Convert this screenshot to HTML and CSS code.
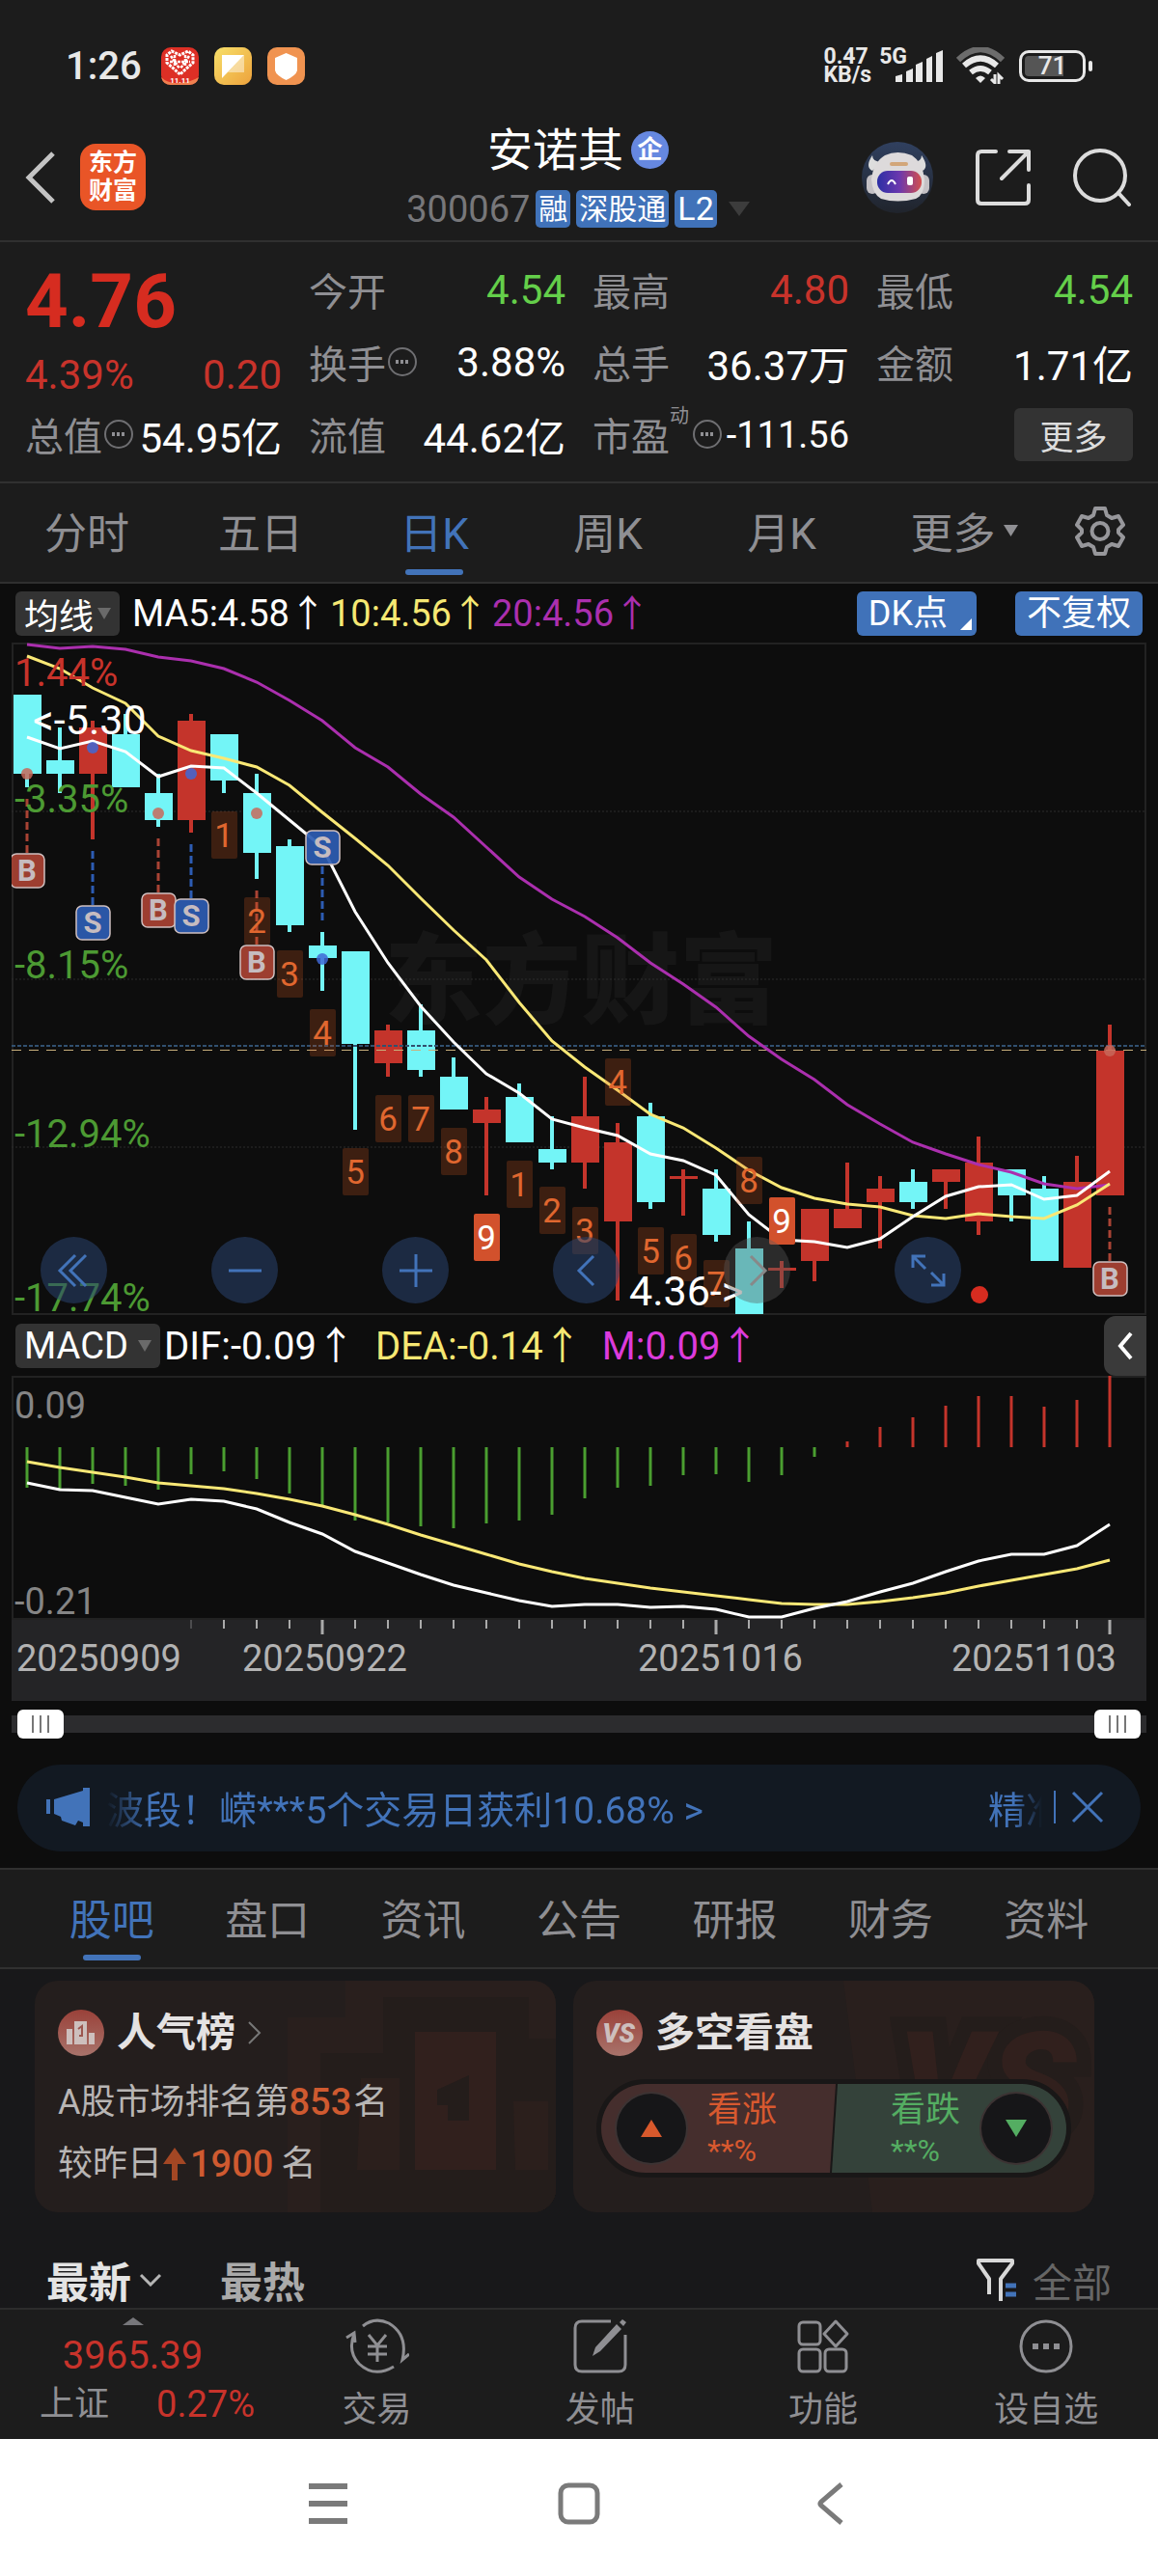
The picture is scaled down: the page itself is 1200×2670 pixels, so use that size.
FILE: index.html
```html
<!DOCTYPE html>
<html lang="zh-CN">
	<head>
		<meta charset="utf-8">
		<meta name="viewport" content="width=device-width, initial-scale=1">
		<title>安诺其 300067</title>
		<link rel="stylesheet" href="styles.css">
	</head>
	<body>
		<!-- 系统状态栏 -->
		<div class="status">
			<div class="status-left">
				<span class="clock">1:26</span>
				<svg class="app-icon" viewBox="0 0 39 39">
					<rect width="39" height="39" rx="10" fill="#dd2f25"/>
					<path d="M0 31Q7 38 19 37T39 31Q37 39 29 39H10Q2 39 0 31Z" fill="#f08050"/>
					<path d="M19.500 28L6 16V8L11 4L19.500 8L28 4L33 8V16Z" fill="none" stroke="#fff" stroke-width="3" stroke-dasharray="3 1"/>
					<path d="M10 9L19 22M29 9L20 22M9 15H30M14 8V19M25 8V19" stroke="#fff" stroke-width="2.500" stroke-dasharray="3 1"/>
					<text x="19.500" y="37" text-anchor="middle" font-size="8" font-weight="700" fill="#fff">11.11</text>
				</svg>
				<svg class="app-icon" viewBox="0 0 39 39">
					<defs><linearGradient id="gold" x1="0" y1="0" x2="1" y2="1"><stop offset="0" stop-color="#f7e06a"/><stop offset="1" stop-color="#eda23c"/></linearGradient></defs>
					<rect width="39" height="39" rx="10" fill="url(#gold)"/>
					<path d="M8 8H31L8 32Z" fill="#fff"/>
					<path d="M31 8V26H14Z" fill="#fff" opacity=".45"/>
				</svg>
				<svg class="app-icon" viewBox="0 0 39 39">
					<rect width="39" height="39" rx="10" fill="#f09350"/>
					<path d="M19.500 6L31 11V24Q30 29 19.500 34Q9 29 8 24V11Z" fill="#fff"/>
				</svg>
			</div>
			<div class="status-right">
				<span class="speed">0.47<br>KB/s</span>
				<span class="net">5G</span>
				<svg class="signal" viewBox="0 0 49 33" fill="#e8e8e8">
					<path d="M0 33V27L7 25V33ZM11 33V22L18 19V33ZM21 33V15L28 12V33ZM32 33V9L38 6V33ZM42 33V3L49 0V33Z"/>
				</svg>
				<svg class="wifi" viewBox="0 0 50 38" fill="none">
					<path d="M2 13Q25 -9 48 13" stroke="#6c6c6c" stroke-width="6"/>
					<path d="M8 19Q25 4 42 19M15 26Q25 18 35 26" stroke="#e8e8e8" stroke-width="6"/>
					<path d="M20 32Q25 27 30 32L25 37Z" fill="#e8e8e8"/>
					<path d="M40 28V37L36 33M44 38V29L48 33" stroke="#e8e8e8" stroke-width="3"/>
				</svg>
				<span class="battery"><span class="battery-level">71</span></span>
			</div>
		</div>

		<header class="topbar">
			<div class="topbar-left">
				<button class="icon-btn" aria-label="返回">
					<svg width="32" height="56" viewBox="0 0 32 56"><path d="M29 3L4 28L29 53" fill="none" stroke="#c4c4c4" stroke-width="5"/></svg>
				</button>
				<a class="brand" href="#">东方<br>财富</a>
			</div>
			<div class="title">
				<h1>安诺其<span class="corp">企</span></h1>
				<p class="code">
					<span>300067</span><span class="chip">融</span><span class="chip">深股通</span><span class="chip chip-l2">L2</span>
					<svg width="22" height="15" viewBox="0 0 22 15"><path d="M0 0H22L11 15Z" fill="#3c3c3c"/></svg>
				</p>
			</div>
			<div class="topbar-right">
				<button class="icon-btn" aria-label="智能助手">
					<svg width="76" height="76" viewBox="0 0 76 76">
						<defs>
							<linearGradient id="night" x2="0" y2="1"><stop offset="0" stop-color="#30405f"/><stop offset="1" stop-color="#20242c"/></linearGradient>
							<linearGradient id="visor"><stop offset="0" stop-color="#2c2fa5"/><stop offset=".5" stop-color="#6b38ae"/><stop offset="1" stop-color="#d3504e"/></linearGradient>
						</defs>
						<circle cx="38" cy="38" r="37" fill="url(#night)"/>
						<path d="M12 15Q4 27 12 31L22 22Q12 22 12 15ZM63 15Q71 27 64 31L54 22Q63 22 63 15Z" fill="#ddd"/>
						<rect x="6" y="35" width="12" height="20" rx="6" fill="#c4c1c5"/>
						<rect x="59" y="35" width="12" height="20" rx="6" fill="#c4c1c5"/>
						<path d="M25 15Q38 9 53 15Q64 22 66 40Q66 56 57 60Q38 65 21 60Q12 55 11 40Q13 22 25 15Z" fill="#dddadb"/>
						<rect x="17" y="31" width="46" height="23" rx="11" fill="url(#visor)"/>
						<rect x="30" y="22" width="19" height="4" rx="2" fill="#d2a679"/>
						<path d="M28 45Q32 37 36 45" fill="none" stroke="#fff" stroke-width="2"/>
						<rect x="48" y="37" width="6" height="9" rx="2" fill="#fff"/>
					</svg>
				</button>
				<button class="icon-btn" aria-label="分享">
					<svg width="60" height="60" viewBox="0 0 60 60" fill="none" stroke="#dcdcdc" stroke-width="4" stroke-linecap="round" stroke-linejoin="round"><path d="M22 3H7Q3 3 3 7V53Q3 57 7 57H52Q56 57 56 53V38M36 3H56V22M56 3L28 31"/></svg>
				</button>
				<button class="icon-btn" aria-label="搜索">
					<svg width="60" height="60" viewBox="0 0 60 60" fill="none" stroke="#dcdcdc" stroke-width="4" stroke-linecap="round"><circle cx="28" cy="28" r="26"/><path d="M47 46L58 58"/></svg>
				</button>
			</div>
		</header>

		<!-- 行情数据 -->
		<section class="quote">
			<div class="price-box">
				<strong class="price">4.76</strong>
				<div class="price-diff"><span>4.39%</span><span>0.20</span></div>
			</div>
			<div class="cell"><span class="label">今开</span><span class="down">4.54</span></div>
			<div class="cell"><span class="label">最高</span><span class="up">4.80</span></div>
			<div class="cell"><span class="label">最低</span><span class="down">4.54</span></div>
			<div class="cell"><span class="label">换手<i class="info"></i></span><span>3.88%</span></div>
			<div class="cell"><span class="label">总手</span><span>36.37万</span></div>
			<div class="cell"><span class="label">金额</span><span>1.71亿</span></div>
			<div class="cell"><span class="label">总值<i class="info"></i></span><span>54.95亿</span></div>
			<div class="cell"><span class="label">流值</span><span>44.62亿</span></div>
			<div class="cell"><span class="label">市盈<sup>动</sup><i class="info"></i></span><span class="pe">-111.56</span></div>
			<div class="cell cell-more"><button class="more-btn">更多</button></div>
		</section>

		<nav class="periods">
			<button>分时</button>
			<button>五日</button>
			<button class="active">日K</button>
			<button>周K</button>
			<button>月K</button>
			<button class="period-more">更多<svg width="15" height="12" viewBox="0 0 15 12"><path d="M0 0H15L7.500 12Z" fill="#8f8f93"/></svg></button>
			<button class="period-set" aria-label="设置">
				<svg width="52" height="52" viewBox="0 0 52 52" fill="none" stroke="#97979b" stroke-width="4" stroke-linejoin="round">
					<path d="M21 3H31L33 10L38 13L45 11L50 20L45 25V28L50 33L45 42L38 40L33 43L31 50H21L19 43L14 40L7 42L2 33L7 28V25L2 20L7 11L14 13L19 10Z"/><circle cx="26" cy="26.500" r="8.500"/>
				</svg>
			</button>
		</nav>

		<main class="charts">
			<div class="toolbar">
				<button class="ind-btn">均线<svg width="14" height="12" viewBox="0 0 14 12"><path d="M0 0H14L7 12Z" fill="#6a6a6a"/></svg></button>
				<span class="ma5">MA5:4.58<b>↑</b></span>
				<span class="ma10">10:4.56<b>↑</b></span>
				<span class="ma20">20:4.56<b>↑</b></span>
				<button class="blue-btn dk">DK点</button>
				<button class="blue-btn">不复权</button>
			</div>

			<div class="kline">
				<svg id="kline" viewBox="12 666 1176 698"></svg>
				<div class="kline-tools">
					<button aria-label="最左"><svg viewBox="0 0 40 40"><path d="M21 4L5 20L21 36M32 4L16 20L32 36"/></svg></button>
					<button aria-label="缩小"><svg viewBox="0 0 40 40"><path d="M3 20H37"/></svg></button>
					<button aria-label="放大"><svg viewBox="0 0 40 40"><path d="M3 20H37M20 3V37"/></svg></button>
					<button aria-label="左移"><svg viewBox="0 0 40 40"><path d="M27 5L12 20L27 35"/></svg></button>
					<button class="off" aria-label="右移"><svg viewBox="0 0 40 40"><path d="M13 5L28 20L13 35"/></svg></button>
					<button aria-label="全屏"><svg viewBox="0 0 40 40"><path d="M4 17V5H17M5 6L17 18M36 23V35H23M35 34L23 22"/></svg></button>
				</div>
			</div>

			<div class="toolbar toolbar-macd">
				<button class="ind-btn macd-btn">MACD<svg width="14" height="12" viewBox="0 0 14 12"><path d="M0 0H14L7 12Z" fill="#6a6a6a"/></svg></button>
				<span class="ma5">DIF:-0.09<b>↑</b></span>
				<span class="ma10">DEA:-0.14<b>↑</b></span>
				<span class="m-val">M:0.09<b>↑</b></span>
				<button class="fold-btn" aria-label="展开"><svg width="18" height="30" viewBox="0 0 18 30"><path d="M15 2L4 15L15 28" fill="none" stroke="#fff" stroke-width="4"/></svg></button>
			</div>
			<svg id="macd" viewBox="12 1426 1176 337"></svg>

			<div class="range">
				<input type="range" min="0" max="100" value="0" aria-label="起始日期">
				<input type="range" min="0" max="100" value="100" aria-label="结束日期">
			</div>

			<div class="notice">
				<svg width="46" height="40" viewBox="0 0 46 40" fill="#4273b9"><path d="M0 12H4V27H0ZM8 12L38 3V0H45V40H38V36L33 34L30 39L16 34L15 30L8 27Z"/></svg>
				<a class="notice-text" href="#">波段！嵘***5个交易日获利10.68% &gt;</a>
				<a class="notice-next" href="#">精准</a>
				<button class="icon-btn notice-close" aria-label="关闭">
					<svg width="34" height="34" viewBox="0 0 34 34"><path d="M2 2L32 32M32 2L2 32" stroke="#4273b9" stroke-width="3"/></svg>
				</button>
			</div>
		</main>

		<nav class="sections">
			<button class="active">股吧</button>
			<button>盘口</button>
			<button>资讯</button>
			<button>公告</button>
			<button>研报</button>
			<button>财务</button>
			<button>资料</button>
		</nav>

		<section class="feed">
			<div class="cards">
				<article class="card">
					<svg class="card-bg" viewBox="0 0 540 240" aria-hidden="true">
						<path d="M262 240V38H322V0H540V240Z" fill="#291f1d"/>
						<path d="M296 240V75H361V17H512V60H540V240Z" fill="#241d1b"/>
						<path d="M394 53H478V196H394Z" fill="#31201d"/>
						<path d="M338 101H378V196H334ZM496 125H532V196H498Z" fill="#2b1f1c"/>
						<path d="M417 113L450 98V145H428V129H417Z" fill="#241d1b"/>
					</svg>
					<h2>
						<svg width="48" height="48" viewBox="0 0 48 48">
							<defs><linearGradient id="rose" x2="0" y2="1"><stop offset="0" stop-color="#9a4139"/><stop offset="1" stop-color="#a8736b"/></linearGradient></defs>
							<circle cx="24" cy="24" r="24" fill="url(#rose)"/>
							<path d="M9 20H15V36H9ZM17 12H30V36H17ZM32 24H38V36H32Z" fill="#cdbfbd"/>
							<path d="M21 20L25 17V27H22" fill="none" stroke="#9c564f" stroke-width="2"/>
						</svg>
						<span>人气榜</span>
						<svg width="14" height="26" viewBox="0 0 14 26"><path d="M1 2L12 13L1 24" fill="none" stroke="#777" stroke-width="2"/></svg>
					</h2>
					<p>A股市场排名第<em>853</em>名</p>
					<p>较昨日<svg class="rise" width="24" height="34" viewBox="0 0 24 34"><path d="M12 0L24 17H15V34H9V17H0Z" fill="#a34724"/></svg><em>1900</em>名</p>
				</article>
				<article class="card">
					<svg class="card-bg" viewBox="0 0 540 240" aria-hidden="true">
						<path d="M280 0H540V240H310Z" fill="#291f1d"/>
						<text x="336" y="158" font-size="148" font-weight="900" font-style="italic" fill="#31201d" stroke="#241d1b" stroke-width="30" paint-order="stroke">VS</text>
					</svg>
					<h2>
						<svg width="48" height="48" viewBox="0 0 48 48">
							<circle cx="24" cy="24" r="24" fill="url(#rose)"/>
							<text x="23" y="34" text-anchor="middle" font-size="27" font-weight="900" font-style="italic" fill="#cdbfbd">VS</text>
						</svg>
						<span>多空看盘</span>
					</h2>
					<div class="vote">
						<button class="bull">
							<span class="knob"><svg width="24" height="20" viewBox="0 0 24 20"><path d="M12 1L23 19H1Z" fill="#d8592c"/></svg></span>
							<span class="vote-text">看涨<small>**%</small></span>
						</button>
						<button class="bear">
							<span class="vote-text">看跌<small>**%</small></span>
							<span class="knob"><svg width="24" height="20" viewBox="0 0 24 20"><path d="M12 19L1 1H23Z" fill="#54ad62"/></svg></span>
						</button>
					</div>
				</article>
			</div>
			<div class="sort">
				<button class="sort-on">最新<svg width="24" height="14" viewBox="0 0 24 14"><path d="M2 2L12 12L22 2" fill="none" stroke="#b5b5b5" stroke-width="3"/></svg></button>
				<button>最热</button>
				<button class="filter">
					<svg width="46" height="46" viewBox="0 0 46 46" fill="none" stroke-width="4"><path d="M15 38V22L4 6V3H39V6L27 22V45" stroke="#d8d8d8" stroke-linejoin="round"/><path d="M32 29H43M32 38H43" stroke="#4273b9" stroke-width="5"/></svg>
					全部
				</button>
			</div>
		</section>

		<footer class="bottom">
			<a class="index" href="#">
				<svg width="22" height="8" viewBox="0 0 22 8"><path d="M11 0L22 8H0Z" fill="#77777b"/></svg>
				<span class="index-val">3965.39</span>
				<span class="index-row"><span>上证</span><span class="index-pct">0.27%</span></span>
			</a>
			<a class="action" href="#">
				<svg width="66" height="60" viewBox="0 0 66 60" fill="none" stroke="#8f8f93" stroke-width="3">
					<path d="M18 9Q30 -1 45 6Q65 18 59 44L66 38M9 17Q2 35 14 48Q30 63 50 51M1 21L9 16L10 26"/>
					<path d="M24 18L33 29L42 18M33 29V46M23 30H43M23 38H43"/>
				</svg>
				交易
			</a>
			<a class="action" href="#">
				<svg width="60" height="60" viewBox="0 0 60 60" fill="none" stroke="#8f8f93" stroke-width="3">
					<path d="M41 4H11Q4 4 4 11V49Q4 56 11 56H49Q56 56 56 49V18"/>
					<path d="M22 40L25 31L47 7L52 12L30 35ZM50 5L53 2L57 5L54 9Z" fill="#8f8f93" stroke="none"/>
				</svg>
				发帖
			</a>
			<a class="action" href="#">
				<svg width="60" height="60" viewBox="0 0 60 60" fill="none" stroke="#8f8f93" stroke-width="3">
					<rect x="5" y="5" width="22" height="23" rx="4"/><path d="M43 4L55 17L43 30L31 17Z" stroke-linejoin="round"/>
					<rect x="5" y="33" width="22" height="23" rx="4"/><rect x="32" y="33" width="22" height="23" rx="4"/>
				</svg>
				功能
			</a>
			<a class="action" href="#">
				<svg width="60" height="60" viewBox="0 0 60 60" fill="none" stroke="#8f8f93" stroke-width="3">
					<circle cx="30" cy="30" r="26"/><path d="M16 30H22M27 30H33M38 30H44" stroke-width="6"/>
				</svg>
				设自选
			</a>
		</footer>

		<!-- 系统导航键 -->
		<div class="sysnav">
			<button class="icon-btn" aria-label="菜单"><svg width="44" height="44" viewBox="0 0 44 44"><path d="M2 4H42M2 22H42M2 40H42" stroke="#7a7a7a" stroke-width="6"/></svg></button>
			<button class="icon-btn" aria-label="主页"><svg width="44" height="44" viewBox="0 0 44 44"><rect x="3" y="3" width="38" height="38" rx="8" fill="none" stroke="#7a7a7a" stroke-width="5"/></svg></button>
			<button class="icon-btn" aria-label="后退"><svg width="44" height="44" viewBox="0 0 44 44"><path d="M34 2L13 20Q11 22 13 24L34 42" fill="none" stroke="#7a7a7a" stroke-width="5"/></svg></button>
		</div>

		<script src="chart.js"></script>
	</body>
</html>
```
FILE: styles.css
```css
* {
	box-sizing: border-box;
}

body {
	margin: 0;
	background-color: #1c1c1c;
	color: #fff;
	font-family: Roboto, "Noto Sans CJK SC", sans-serif;
	font-size: 40px;
}

h1,
h2,
p {
	margin: 0;
	font-weight: 400;
}

svg {
	display: block;
	flex: none;
}

svg text {
	font-family: Roboto, "Noto Sans CJK SC", sans-serif;
}

button {
	padding: 0;
	border: none;
	background: none;
	color: inherit;
	font: inherit;
	cursor: pointer;
}

a {
	color: inherit;
	text-decoration: none;
}

/* 状态栏 */
.status {
	display: flex;
	justify-content: space-between;
	align-items: center;
	height: 118px;
	padding: 18px 68px 0;
	color: #e8e8e8;
}

.status-left,
.status-right {
	display: flex;
	align-items: center;
}

.status-left {
	gap: 16px;
}

.clock {
	margin-right: 4px;
	font-size: 40px;
	font-weight: 500;
}

.app-icon {
	width: 39px;
	height: 39px;
}

.speed,
.net {
	font-size: 23px;
	line-height: 19px;
	font-weight: 700;
}

.net {
	align-self: flex-start;
	margin-left: 8px;
}

.signal {
	width: 49px;
	height: 33px;
	margin-left: -12px;
}

.wifi {
	width: 50px;
	height: 38px;
	margin: 0 15px 0 14px;
}

.battery {
	position: relative;
	width: 69px;
	height: 33px;
	padding: 3px;
	margin-right: 7px;
	border: 3px solid #e8e8e8;
	border-radius: 10px;
}

.battery::after {
	content: "";
	position: absolute;
	top: 8px;
	right: -10px;
	width: 4px;
	height: 11px;
	border-radius: 2px;
	background-color: #e8e8e8;
}

.battery-level {
	display: block;
	border-radius: 4px;
	background: linear-gradient(to right, #555 71%, transparent 71%);
	font-size: 26px;
	line-height: 21px;
	font-weight: 500;
	text-align: center;
}

/* 标题栏 */
.topbar {
	display: grid;
	grid-template-columns: 1fr auto 1fr;
	align-items: center;
	height: 133px;
	padding: 0 28px 0 26px;
	border-bottom: 2px solid #303030;
}

.topbar-left,
.topbar-right {
	display: flex;
	align-items: center;
}

.topbar-left {
	gap: 25px;
}

.topbar-right {
	justify-content: flex-end;
	gap: 42px;
}

.brand {
	width: 68px;
	height: 69px;
	padding-top: 5px;
	border-radius: 16px;
	background-color: #e95527;
	font-size: 25px;
	line-height: 29px;
	font-weight: 700;
	text-align: center;
}

.title h1 {
	display: flex;
	justify-content: center;
	align-items: center;
	gap: 8px;
	font-size: 47px;
	line-height: 60px;
}

.corp {
	width: 39px;
	height: 39px;
	border-radius: 50%;
	background-color: #6688e0;
	font-size: 26px;
	line-height: 38px;
	font-weight: 700;
	text-align: center;
}

.code {
	display: flex;
	justify-content: center;
	align-items: center;
	gap: 6px;
	padding-top: 6px;
	color: #77777a;
	font-size: 38px;
	line-height: 50px;
}

.code svg {
	margin-left: 6px;
}

.chip {
	padding: 0 3px;
	border-radius: 5px;
	background-color: #4072b9;
	color: #fff;
	font-size: 30px;
	line-height: 39px;
}

.chip-l2 {
	font-size: 34px;
}

/* 行情 */
.quote {
	display: grid;
	grid-template-columns: repeat(4, 1fr);
	grid-auto-rows: 75px;
	column-gap: 28px;
	padding: 13px 26px 10px;
	border-bottom: 2px solid #303030;
	font-size: 42px;
}

.price-box {
	grid-row: span 2;
}

.price {
	display: block;
	color: #d62c20;
	font-size: 78px;
	line-height: 98px;
	font-weight: 700;
}

.price-diff {
	display: flex;
	justify-content: space-between;
	color: #c8332b;
	line-height: 54px;
}

.cell {
	display: flex;
	justify-content: space-between;
	align-items: center;
	padding-bottom: 2px;
	white-space: nowrap;
}

.label {
	display: flex;
	align-items: center;
	padding-bottom: 2px;
	color: #8f8f93;
	font-size: 40px;
}

.label sup {
	align-self: flex-start;
	margin-right: 4px;
	font-size: 20px;
	line-height: 20px;
}

.info {
	display: grid;
	place-items: center;
	width: 30px;
	height: 30px;
	margin-left: 2px;
	border: 2px solid #6f6f72;
	border-radius: 50%;
}

.label sup + .info {
	margin-left: 0;
}

.info::before {
	content: "";
	width: 16px;
	height: 4px;
	background: radial-gradient(circle, #8f8f93 2px, transparent 2px) 0 0 / 5px 4px;
}

.pe {
	font-size: 38px;
}

.up {
	color: #c8332b;
}

.down {
	color: #64cf4a;
}

.cell-more {
	justify-content: flex-end;
}

.more-btn {
	width: 123px;
	height: 55px;
	border-radius: 6px;
	background-color: #333;
	color: #ddd;
	font-size: 35px;
}

/* 周期 */
.periods {
	display: grid;
	grid-template-columns: repeat(6, 3fr) 2fr;
	height: 104px;
	border-bottom: 2px solid #303030;
	color: #8f8f93;
	font-size: 44px;
}

.periods button,
.sections button {
	position: relative;
	padding-bottom: 4px;
}

.active {
	color: #4273b9;
}

.active::after {
	content: "";
	position: absolute;
	bottom: 7px;
	left: calc(50% - 30px);
	width: 60px;
	height: 6px;
	border-radius: 3px;
	background-color: #4273b9;
}

.period-more,
.period-set {
	display: flex;
	justify-content: center;
	align-items: center;
	gap: 8px;
}

.period-more {
	padding-left: 18px;
}

/* 图表 */
.charts {
	padding: 0 12px 17px;
	background-color: #0d0d0d;
}

.toolbar {
	display: flex;
	align-items: center;
	height: 61px;
	padding: 0 4px;
	font-size: 38px;
	white-space: nowrap;
}

.toolbar b {
	margin-right: 4px;
	font-family: "Noto Sans CJK SC", sans-serif;
	font-weight: 400;
	line-height: 0;
}

.ind-btn {
	display: flex;
	justify-content: center;
	align-items: center;
	gap: 4px;
	width: 108px;
	height: 46px;
	margin-right: 13px;
	border-radius: 6px;
	background-color: #333;
	font-size: 36px;
}

.ma10 {
	color: #f6e873;
}

.ma20 {
	color: #ab2fae;
}

.m-val {
	color: #dc3bdc;
}

.blue-btn {
	position: relative;
	height: 46px;
	padding: 0 12px;
	border-radius: 6px;
	background-color: #4072b9;
	font-size: 36px;
	line-height: 46px;
}

.dk {
	margin: 0 40px 0 auto;
	padding-right: 30px;
}

.dk::after {
	content: "";
	position: absolute;
	right: 5px;
	bottom: 6px;
	border-left: 12px solid transparent;
	border-bottom: 12px solid #fff;
}

.kline {
	position: relative;
}

/* 悬浮在K线图上的按钮 */
.kline-tools {
	position: absolute;
	left: 30px;
	bottom: 13px;
	display: flex;
	gap: 108px;
}

.kline-tools button {
	display: grid;
	place-items: center;
	width: 69px;
	height: 69px;
	border-radius: 50%;
	background-color: rgba(42, 68, 112, 0.55);
}

.kline-tools .off {
	background-color: rgba(90, 90, 90, 0.4);
}

.kline-tools svg {
	width: 40px;
	height: 40px;
	fill: none;
	stroke: #4273b9;
	stroke-width: 3;
}

.kline-tools .off svg {
	stroke: #888;
}

.toolbar-macd {
	height: 62px;
	padding-right: 0;
	font-size: 40px;
}

.toolbar-macd span {
	margin-right: 17px;
}

.macd-btn {
	width: 150px;
	margin-right: 4px;
	gap: 10px;
	font-size: 38px;
}

.fold-btn {
	display: grid;
	place-items: center;
	width: 44px;
	height: 62px;
	margin-left: auto;
	border-radius: 12px 0 0 12px;
	background-color: #3a3a3a;
}

/* 区间滑块 */
.range {
	display: grid;
	align-items: center;
	height: 48px;
	padding: 0 6px;
	background: linear-gradient(#2c2c2e, #2c2c2e) center / 100% 18px no-repeat;
}

.range input {
	grid-area: 1 / 1;
	width: 100%;
	height: 30px;
	margin: 0;
	background: none;
	pointer-events: none;
	-webkit-appearance: none;
	appearance: none;
}

.range input::-webkit-slider-thumb {
	-webkit-appearance: none;
	width: 48px;
	height: 30px;
	border-radius: 6px;
	background: repeating-linear-gradient(to right, #777 0 2px, #fff 2px 8px) center / 18px 18px no-repeat #fff;
	pointer-events: auto;
}

/* 公告条 */
.notice {
	display: flex;
	align-items: center;
	height: 90px;
	margin: 18px 6px 0;
	padding: 0 38px 2px 30px;
	border-radius: 45px;
	background-color: #121922;
	color: #4273b9;
	font-size: 39px;
	white-space: nowrap;
}

.notice-text {
	flex: 1;
	margin-left: 16px;
	-webkit-mask-image: linear-gradient(to right, transparent, #000 45px);
	mask-image: linear-gradient(to right, transparent, #000 45px);
}

.notice-next {
	width: 56px;
	overflow: hidden;
	-webkit-mask-image: linear-gradient(to left, transparent, #000 30px);
	mask-image: linear-gradient(to left, transparent, #000 30px);
}

.notice-close {
	margin-left: 12px;
	padding-left: 16px;
	border-left: 2px solid #4273b9;
}

/* 栏目 */
.sections {
	display: grid;
	grid-template-columns: repeat(7, 1fr);
	height: 105px;
	padding: 0 35px;
	border-top: 2px solid #303030;
	border-bottom: 2px solid #303030;
	color: #8f8f93;
	font-size: 44px;
}

.feed {
	padding-top: 12px;
	background-color: #18181a;
}

.cards {
	display: grid;
	grid-template-columns: 1fr 1fr;
	gap: 18px;
	padding: 0 66px 0 36px;
}

.card {
	position: relative;
	height: 240px;
	padding: 28px 24px;
	border-radius: 24px;
	background-color: #241e1d;
	overflow: hidden;
	color: #b8b5b4;
	font-size: 36px;
}

.card > * {
	position: relative;
}

.card .card-bg {
	position: absolute;
	top: 0;
	right: 0;
	height: 100%;
}

.card h2 {
	display: flex;
	align-items: center;
	gap: 13px;
	margin-bottom: 14px;
	color: #e4e2e2;
	font-size: 41px;
	line-height: 52px;
	font-weight: 700;
}

.card p {
	display: flex;
	align-items: center;
	line-height: 64px;
}

.card em {
	margin-right: 2px;
	color: #cf5a30;
	font-size: 38px;
	font-style: normal;
	font-weight: 500;
}

.card .rise + em {
	margin: 0 8px 0 4px;
}

.rise {
	margin-left: 1px;
}

.vote {
	display: flex;
	margin-top: 22px;
	border: 5px solid #191717;
	border-radius: 52px;
	background-color: #191717;
	overflow: hidden;
}

.vote button {
	display: flex;
	flex: 1;
	align-items: center;
	gap: 20px;
	height: 92px;
	padding: 0 14px;
}

.vote .bull {
	margin-right: -4px;
	background-color: #452e2d;
	color: #d8592f;
	clip-path: polygon(0 0, 100% 0, calc(100% - 6px) 100%, 0 100%);
}

.vote .bear {
	justify-content: flex-end;
	background-color: #34423a;
	color: #54ad62;
	clip-path: polygon(6px 0, 100% 0, 100% 100%, 0 100%);
}

.knob {
	display: grid;
	place-items: center;
	width: 76px;
	height: 76px;
	border: 2px solid rgba(150, 120, 115, 0.3);
	border-radius: 50%;
	background-color: #161618;
}

.vote-text {
	font-size: 36px;
	line-height: 46px;
	text-align: left;
}

.vote-text small {
	display: block;
	font-size: 32px;
	line-height: 38px;
}

.sort {
	display: flex;
	align-items: center;
	height: 99px;
	padding: 40px 48px 0;
	color: #aaa;
	font-size: 44px;
	font-weight: 700;
}

.sort-on {
	display: flex;
	align-items: center;
	gap: 8px;
	margin-right: 60px;
	color: #e4e4e4;
}

.filter {
	display: flex;
	align-items: center;
	gap: 14px;
	margin-left: auto;
	color: #666;
	font-size: 41px;
	font-weight: 400;
}

/* 底部栏 */
.bottom {
	display: grid;
	grid-template-columns: 275px repeat(4, 1fr);
	height: 136px;
	border-top: 2px solid #2c2c2c;
	color: #8f8f93;
	font-size: 36px;
}

.index,
.action {
	display: flex;
	flex-direction: column;
	align-items: center;
	padding-top: 8px;
}

.action {
	gap: 11px;
	line-height: 50px;
}

.index-val {
	margin-top: 8px;
	color: #c8332b;
	font-size: 40px;
	line-height: 48px;
}

.index-row {
	display: flex;
	justify-content: space-between;
	align-self: stretch;
	padding: 0 11px 0 41px;
	line-height: 52px;
}

.index-pct {
	color: #c8332b;
	font-size: 38px;
}

.sysnav {
	display: flex;
	justify-content: center;
	align-items: center;
	gap: 216px;
	height: 142px;
	padding-bottom: 8px;
	background-color: #fff;
}
```
FILE: chart.js
```js
// [开, 收, 高, 低]
const candles = [
	[5.30, 5.18, 5.30, 5.16], [5.20, 5.18, 5.25, 5.15], [5.18, 5.25, 5.26, 5.08],
	[5.24, 5.16, 5.27, 5.16], [5.15, 5.11, 5.18, 5.10], [5.11, 5.26, 5.27, 5.09],
	[5.24, 5.17, 5.24, 5.15], [5.15, 5.06, 5.18, 5.02], [5.07, 4.95, 5.08, 4.94],
	[4.92, 4.90, 4.94, 4.85], [4.91, 4.77, 4.91, 4.64], [4.74, 4.79, 4.80, 4.72],
	[4.79, 4.73, 4.83, 4.72], [4.72, 4.67, 4.75, 4.67], [4.65, 4.67, 4.69, 4.54],
	[4.69, 4.62, 4.71, 4.62], [4.61, 4.59, 4.66, 4.58], [4.59, 4.66, 4.72, 4.55],
	[4.50, 4.62, 4.65, 4.38], [4.66, 4.53, 4.68, 4.52], [4.57, 4.57, 4.58, 4.51],
	[4.55, 4.48, 4.58, 4.47], [4.46, 4.36, 4.50, 4.36], [4.43, 4.43, 4.44, 4.40],
	[4.44, 4.52, 4.52, 4.41], [4.49, 4.52, 4.59, 4.49], [4.53, 4.55, 4.57, 4.46],
	[4.56, 4.53, 4.58, 4.52], [4.56, 4.58, 4.58, 4.52], [4.50, 4.59, 4.63, 4.48],
	[4.58, 4.54, 4.58, 4.50], [4.55, 4.44, 4.57, 4.44], [4.43, 4.56, 4.60, 4.43],
	[4.54, 4.76, 4.80, 4.54]
];

// 均线
const ma5 = [764, 776, 768, 779, 805, 794, 796, 822, 850, 878, 945, 998, 1043, 1080, 1113, 1133, 1160, 1169, 1177, 1196, 1203, 1218, 1259, 1285, 1287, 1293, 1284, 1261, 1240, 1230, 1228, 1243, 1239, 1214];
const ma10 = [680, 693, 713, 729, 763, 778, 786, 795, 814, 842, 869, 897, 931, 964, 995, 1039, 1079, 1106, 1130, 1155, 1169, 1190, 1213, 1231, 1242, 1248, 1251, 1260, 1263, 1258, 1261, 1263, 1249, 1227];
const ma20 = [668, 672, 670, 673, 681, 685, 693, 707, 726, 747, 775, 795, 823, 847, 878, 909, 932, 950, 972, 998, 1020, 1044, 1074, 1098, 1119, 1145, 1165, 1184, 1196, 1207, 1215, 1227, 1232, 1228];

// MACD
const bars = [42, 44, 38, 40, 44, 28, 25, 33, 48, 60, 76, 78, 82, 84, 79, 76, 70, 53, 42, 40, 29, 28, 36, 29, 10, -6, -21, -31, -43, -53, -53, -42, -49, -74];
const dif = [1537, 1544, 1545, 1552, 1559, 1554, 1556, 1564, 1578, 1590, 1608, 1620, 1632, 1643, 1651, 1659, 1665, 1663, 1663, 1666, 1665, 1668, 1676, 1676, 1667, 1660, 1650, 1641, 1629, 1618, 1611, 1611, 1602, 1580];
const dea = [1515, 1521, 1526, 1531, 1537, 1540, 1543, 1548, 1554, 1561, 1570, 1580, 1591, 1601, 1611, 1621, 1629, 1636, 1641, 1646, 1650, 1654, 1658, 1662, 1663, 1663, 1660, 1656, 1651, 1644, 1638, 1632, 1626, 1617];

// 九转数字 [序号, 数字, 顶部y]
const turns = [[6, 1, 841], [7, 2, 930], [8, 3, 985], [9, 4, 1046], [10, 5, 1190], [11, 6, 1135], [12, 7, 1135], [13, 8, 1169], [14, 9, 1258], [15, 1, 1203], [16, 2, 1230], [17, 3, 1251], [18, 4, 1097], [19, 5, 1272], [20, 6, 1279], [21, 7, 1306], [22, 8, 1199], [23, 9, 1241]];

// 买卖点 [序号, 类型, 标记y, 圆点y, 虚线起点, 虚线终点]
const marks = [[0, 'B', 885, 802, 828, 884], [2, 'S', 939, 775, 882, 938], [4, 'B', 926, 843, 869, 925], [5, 'S', 932, 802, 875, 931], [7, 'B', 980, 843, 923, 979], [9, 'S', 861, 994, 898, 954], [33, 'B', 1308, 1089, 1251, 1307]];

const x = i => 28 + 34 * i;
const y = p => Math.round(720 + (5.30 - p) * 683);
const line = (data, color) => `<polyline points="${data.map((v, i) => x(i) + ',' + v).join(' ')}" fill="none" stroke="${color}" stroke-width="3"/>`;
const text = (tx, ty, s, color, size = 40) => `<text x="${tx}" y="${ty}" font-size="${size}" fill="${color}">${s}</text>`;

function drawKline() {
	let s = '<rect x="13" y="667" width="1174" height="695" fill="none" stroke="#222" stroke-width="2"/>';
	s += '<text x="602" y="1053" text-anchor="middle" font-size="102" font-weight="900" fill="#161616">东方财富</text>';
	[841, 1015, 1189].forEach(gy => {
		s += `<path d="M12 ${gy}H1188" stroke="#2c2c2c" stroke-dasharray="2 2"/>`;
	});
	candles.forEach(([open, close, high, low], i) => {
		const color = close < open ? '#73f5f7' : '#c4342b';
		const top = y(Math.max(open, close));
		const h = Math.max(3, y(Math.min(open, close)) - top);
		s += `<rect x="${x(i) - 2}" y="${y(high)}" width="4" height="${y(low) - y(high)}" fill="${color}"/>`;
		s += `<rect x="${x(i) - 14}" y="${top}" width="29" height="${h}" fill="${color}"/>`;
	});
	s += '<path d="M12 1084H1188" stroke="#31506f" stroke-width="2" stroke-dasharray="4 2"/>';
	s += '<path d="M12 1088.500H1188" stroke="#c9b07c" stroke-dasharray="10 8"/>';
	s += line(ma20, '#ab2fae') + line(ma10, '#f9e876') + line(ma5, '#fff');
	marks.forEach(([i, type, my, dot, from, to]) => {
		const buy = type === 'B';
		const color = buy ? '#a94334' : '#2d5cb3';
		s += `<path d="M${x(i)} ${from}V${to}" stroke="${color}" stroke-width="3" stroke-dasharray="8 4"/>`;
		s += `<circle cx="${x(i)}" cy="${dot}" r="6" fill="${buy ? '#c8695a' : '#3f68d6'}" opacity=".85"/>`;
		s += `<rect x="${x(i) - 17}" y="${my}" width="35" height="35" rx="6" fill="${color}" stroke="#d0c0c0" stroke-width="1.500" fill-opacity=".93"/>`;
		s += `<text x="${x(i)}" y="${my + 28}" text-anchor="middle" font-size="31" font-weight="700" fill="#c6bcc0">${type}</text>`;
	});
	turns.forEach(([i, n, ty]) => {
		s += `<rect x="${x(i) - 13}" y="${ty}" width="27" height="49" rx="2" fill="${n === 9 ? '#d2512c' : '#dc5c20'}" fill-opacity="${n === 9 ? 1 : 0.23}"/>`;
		s += `<text x="${x(i)}" y="${ty + 37}" text-anchor="middle" font-size="35" fill="${n === 9 ? '#fff' : '#e0672f'}">${n}</text>`;
	});
	s += text(15, 711, '1.44%', '#c8332b') + text(15, 842, '-3.35%', '#4c9a33');
	s += text(15, 1014, '-8.15%', '#4c9a33') + text(15, 1189, '-12.94%', '#4c9a33') + text(15, 1359, '-17.74%', '#4c9a33');
	s += text(34, 761, '&lt;-5.30', '#fff', 43) + text(652, 1353, '4.36-&gt;', '#fff', 43);
	s += '<circle cx="1015" cy="1342" r="9" fill="#d62c20"/>';
	document.getElementById('kline').innerHTML = s;
}

function drawMacd() {
	let s = '<rect x="13" y="1427" width="1174" height="251" fill="none" stroke="#222" stroke-width="2"/>';
	s += '<rect x="12" y="1679" width="1176" height="84" fill="#242426"/>';
	bars.forEach((v, i) => {
		s += `<path d="M${x(i)} 1500v${v}" stroke="${v > 0 ? '#4a9e30' : '#c4342b'}" stroke-width="3"/>`;
	});
	s += line(dea, '#f9e876') + line(dif, '#fff');
	// 时间刻度
	for (let i = 5; i < bars.length; i++) {
		const long = i === 9 || i === 21 || i === 33;
		s += `<path d="M${x(i)} 1679v${long ? 15 : 9}" stroke="#aaa" stroke-width="${long ? 3 : 2}" opacity="${i === 5 ? 0.3 : 1}"/>`;
	}
	s += text(15, 1470, '0.09', '#858585', 38) + text(15, 1673, '-0.21', '#858585', 38);
	s += text(17, 1732, '20250909', '#b3b3b3', 38) + text(251, 1732, '20250922', '#b3b3b3', 38);
	s += text(661, 1732, '20251016', '#b3b3b3', 38) + text(986, 1732, '20251103', '#b3b3b3', 38);
	document.getElementById('macd').innerHTML = s;
}

drawKline();
drawMacd();
```
